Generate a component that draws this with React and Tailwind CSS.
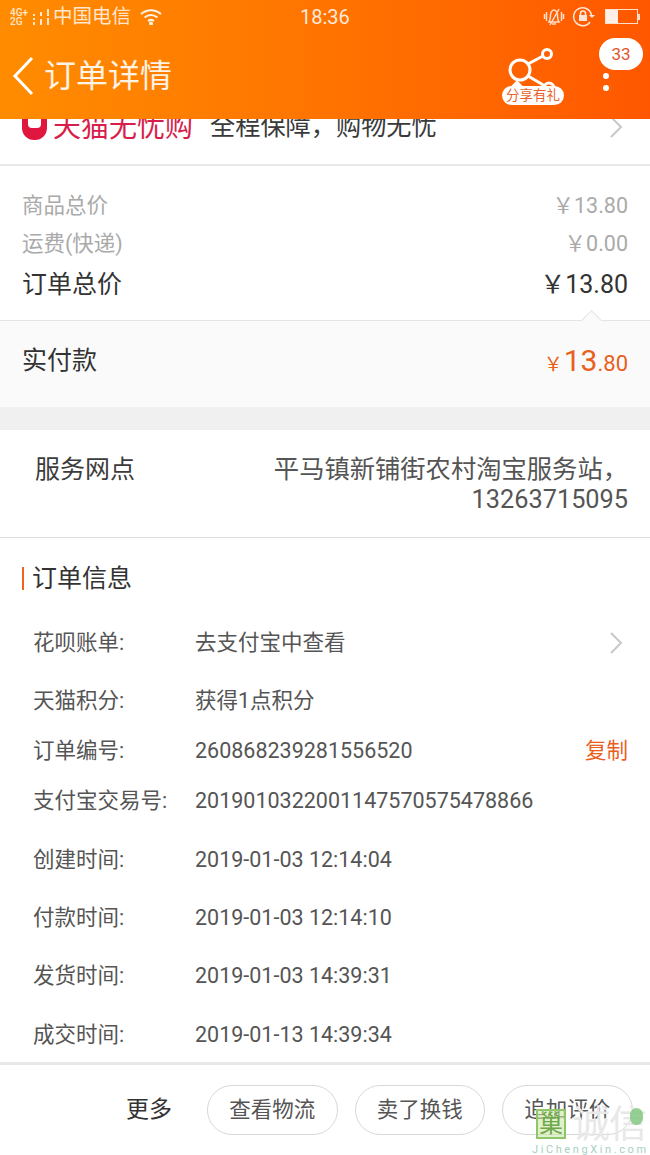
const font = { fontFamily: 'Roboto, "Noto Sans CJK SC", sans-serif' }

const orderRows = [
  { label: '花呗账单:', value: '去支付宝中查看', h: 'h-[58px]', chevron: true },
  { label: '天猫积分:', value: '获得1点积分', h: 'h-[58px]' },
  { label: '订单编号:', value: '260868239281556520', h: 'h-[50px]', copy: true, mt: 'mt-[-4px]' },
  { label: '支付宝交易号:', value: '2019010322001147570575478866', h: 'h-[50px]' },
  { label: '创建时间:', value: '2019-01-03 12:14:04', h: 'h-[58px]', mt: 'mt-[5px]' },
  { label: '付款时间:', value: '2019-01-03 12:14:10', h: 'h-[58px]' },
  { label: '发货时间:', value: '2019-01-03 14:39:31', h: 'h-[58px]' },
  { label: '成交时间:', value: '2019-01-13 14:39:34', h: 'h-[54px]', mt: 'mt-[3px]' },
]

function Chevron({ className }) {
  return (
    <svg className={className} width="14" height="22" viewBox="0 0 14 22" fill="none" stroke="#c8c8c8" strokeWidth="2">
      <path d="M2 1l10 10L2 21" />
    </svg>
  )
}

function StatusBar() {
  return (
    <div className="flex h-[33px] items-center pl-[10px] pr-[10px] text-white">
      <div className="w-[22px] text-[10px] font-medium leading-[9px] opacity-80">
        <div>4G+</div>
        <div>2G</div>
      </div>
      <svg className="opacity-80" width="19" height="16" viewBox="0 0 19 16" fill="#fff">
        <rect x="1" y="5" width="2" height="2" />
        <rect x="1" y="9" width="2" height="2" />
        <rect x="1" y="13" width="2" height="3" />
        <rect x="8" y="3" width="2" height="4" />
        <rect x="8" y="10" width="2" height="6" />
        <rect x="15" y="0" width="2" height="7" />
        <rect x="15" y="9" width="2" height="7" />
      </svg>
      <span className="ml-[2px] w-[87px] text-[19.500px] opacity-80">中国电信</span>
      <svg width="22" height="16" viewBox="0 0 22 16" fill="none" stroke="#fff" strokeWidth="2" className="opacity-90">
        <path d="M1 5c6-5 14-5 20 0M4.500 8.500c4-3 9-3 13 0M8 12c2-1.500 4-1.500 6 0" />
        <circle cx="11" cy="14.500" r="1" fill="#fff" />
      </svg>
      <span className="ml-[138px] text-[20px] opacity-85">18:36</span>
      <div className="ml-auto flex items-center gap-[7px]">
        <svg width="22" height="20" viewBox="0 0 22 20" fill="none" stroke="#fff" strokeWidth="1.500" className="opacity-80">
          <path d="M6 15c1.500-2 1.500-4 1.500-7s2-5 3.500-5 3.500 2 3.500 5 0 5 1.500 7zM9 17h4M16 2L7 18" />
          <path d="M1.500 7v5M3.500 5v9M18.500 5v9M20.500 7v5" />
        </svg>
        <svg width="24" height="22" viewBox="0 0 24 22" fill="none" stroke="#fff" strokeWidth="1.500" className="opacity-85">
          <path d="M19.500 9A9 9 0 1 0 18 16" />
          <path d="M17 9h6l-3 3z" fill="#fff" stroke="none" />
          <rect x="7" y="9" width="8" height="6" fill="#fff" stroke="none" />
          <path d="M8.500 9V7.500a2.500 2.500 0 0 1 5 0V9" />
        </svg>
        <div className="ml-[2px] flex items-center">
          <div className="h-[15px] w-[33px] border border-white/80">
            <div className="h-full w-[12px] bg-white/90" />
          </div>
          <div className="h-[6px] w-[2px] bg-white/80" />
        </div>
      </div>
    </div>
  )
}

function Header() {
  return (
    <header className="relative z-10 h-[119px] bg-gradient-to-r from-[#ff8c00] to-[#ff5700]">
      <StatusBar />
      <div className="flex h-[86px] items-start">
        <svg className="ml-[12px] mt-[23px]" width="22" height="40" viewBox="0 0 22 40" fill="none" stroke="#fff" strokeWidth="3">
          <path d="M20 2L3 20l17 18" />
        </svg>
        <h1 className="ml-[10px] mt-[21px] text-[32px] leading-[44px] text-white/90">订单详情</h1>
        <div className="relative ml-auto mt-[13px] h-[60px] w-[62px]">
          <svg className="absolute left-[5px] top-[2px]" width="50" height="48" viewBox="0 0 50 48" fill="none" stroke="#fff" strokeWidth="3">
            <circle cx="13" cy="22" r="10" />
            <circle cx="40" cy="6" r="4.500" />
            <circle cx="42" cy="40" r="5" />
            <path d="M21 16l15-8M21 28l17 10" />
          </svg>
          <div className="absolute left-[11px] top-[36px] h-[8px] w-[8px] rotate-45 bg-white" />
          <div className="absolute left-0 top-[40px] h-[19px] w-[62px] rounded-full bg-white text-center text-[13.500px] leading-[19px] text-[#e8622a]">
            分享有礼
          </div>
        </div>
        <div className="ml-[35px] mr-[7px] mt-[5px] w-[44px]">
          <div className="h-[32px] rounded-full bg-white text-center text-[17px] leading-[32px] text-[#e0552a]">33</div>
          <div className="ml-[4px] mt-[3px] h-[6px] w-[6px] rounded-full bg-white" />
          <div className="ml-[4px] mt-[6px] h-[6px] w-[6px] rounded-full bg-white" />
        </div>
      </div>
    </header>
  )
}

function TmallRow() {
  return (
    <div className="flex h-[47px] items-start overflow-hidden border-b-2 border-[#e8e8e8] bg-white pl-[22px] pr-[27px]">
      <div className="relative -mt-[5px] h-[26px] w-[25px] rounded-b-[12px] bg-[#e0163f]">
        <div className="absolute left-[6px] top-[5px] h-[9px] w-[13px] rounded-b-[4px] bg-white" />
      </div>
      <span className="-mt-[11px] ml-[6px] w-[157px] whitespace-nowrap text-[28px] leading-[40px] text-[#d81e4a]">天猫无忧购</span>
      <span className="-mt-[10px] text-[25.200px] leading-[36px] text-[#3a3a3a]">全程保障，购物无忧</span>
      <Chevron className="ml-auto mt-[-3px]" />
    </div>
  )
}

function PriceRow({ label, value, big }) {
  return (
    <div className={`flex items-center justify-between ${big ? 'h-[43px] text-[25px] text-[#333]' : 'h-[38px] text-[21.500px] text-[#aaaaaa]'}`}>
      <span>{label}</span>
      <span>{value}</span>
    </div>
  )
}

function Prices() {
  return (
    <section className="bg-white">
      <div className="px-[22px] pb-[14px] pt-[21px]">
        <PriceRow label="商品总价" value="￥13.80" />
        <PriceRow label="运费(快递)" value="￥0.00" />
        <PriceRow label="订单总价" value="￥13.80" big />
      </div>
      <div className="relative flex h-[87px] items-start justify-between border-t border-[#e4e4e4] bg-[#fafafa] px-[22px] pt-[21px]">
        <div className="absolute right-[51px] top-[-8px] h-[15px] w-[15px] rotate-45 border-l border-t border-[#e4e4e4] bg-[#fafafa]" />
        <span className="text-[25px] leading-[38px] text-[#333]">实付款</span>
        <span className="text-[#e8601c]">
          <span className="text-[19px]">￥</span>
          <span className="ml-[1px] text-[30px] leading-[38px]">13</span>
          <span className="text-[22px]">.80</span>
        </span>
      </div>
      <div className="h-[23px] bg-[#f0f0f0]" />
    </section>
  )
}

function ServiceRow() {
  return (
    <section className="flex h-[108px] justify-between border-b border-[#dddddd] bg-white pl-[35px] pr-[22px] pt-[25px] text-[25px] leading-[30px] text-[#3c3c3c]">
      <span>服务网点</span>
      <span className="text-right text-[25.300px] text-[#555]">
        平马镇新铺街农村淘宝服务站，
        <br />
        13263715095
      </span>
    </section>
  )
}

function OrderInfo() {
  return (
    <section className="h-[524px] bg-white">
      <div className="flex h-[76px] items-center pl-[22px] pt-[5px]">
        <div className="h-[23px] w-[2px] bg-[#f0651e]" />
        <h2 className="ml-[8px] text-[25px] text-[#333]">订单信息</h2>
      </div>
      {orderRows.map((row) => (
        <div key={row.label} className={`flex items-center pl-[33px] pr-[22px] text-[21.500px] ${row.h} ${row.mt || ''}`}>
          <span className="w-[162px] shrink-0 text-[#555]">{row.label}</span>
          <span className="text-[#555]">{row.value}</span>
          {row.chevron && <Chevron className="ml-auto mr-[5px]" />}
          {row.copy && <span className="ml-auto text-[#e8601c]">复制</span>}
        </div>
      ))}
    </section>
  )
}

function Footer() {
  return (
    <footer className="relative flex h-[93px] items-start border-t-[3px] border-[#e8e8e8] bg-white pl-[126px] pt-[20px]">
      <span className="mr-[35px] text-[23px] leading-[50px] text-[#333]">更多</span>
      <div className="flex gap-[17px]">
        {['查看物流', '卖了换钱', '追加评价'].map((label) => (
          <button key={label} className="h-[50px] w-[130.500px] rounded-full border border-[#d8d8d8] text-[21.500px] text-[#555]">
            {label}
          </button>
        ))}
      </div>
      <div className="absolute left-[536px] top-[44px] flex h-[30px] w-[30px] items-center justify-center border-2 border-[#8fc66a] bg-[#cde8a8]/60 text-[24px] leading-none text-[#6fa84a]">
        巢
      </div>
      <div className="absolute left-[572px] top-[40px] whitespace-nowrap text-[38px] leading-[38px] tracking-[-1px] text-[#e8e8e8]">诚信</div>
      <div className="absolute left-[630px] top-[43px] h-[17px] w-[13px] rounded-full bg-[#7cc47a]/80" />
      <div className="absolute left-[532px] top-[77px] whitespace-nowrap text-[11px] tracking-[2.600px] text-[#a8d0c0]">JiChengXin.com</div>
    </footer>
  )
}

export default function App() {
  return (
    <div className="h-[1155px] w-[650px] overflow-hidden bg-white" style={font}>
      <Header />
      <TmallRow />
      <Prices />
      <ServiceRow />
      <OrderInfo />
      <Footer />
    </div>
  )
}
